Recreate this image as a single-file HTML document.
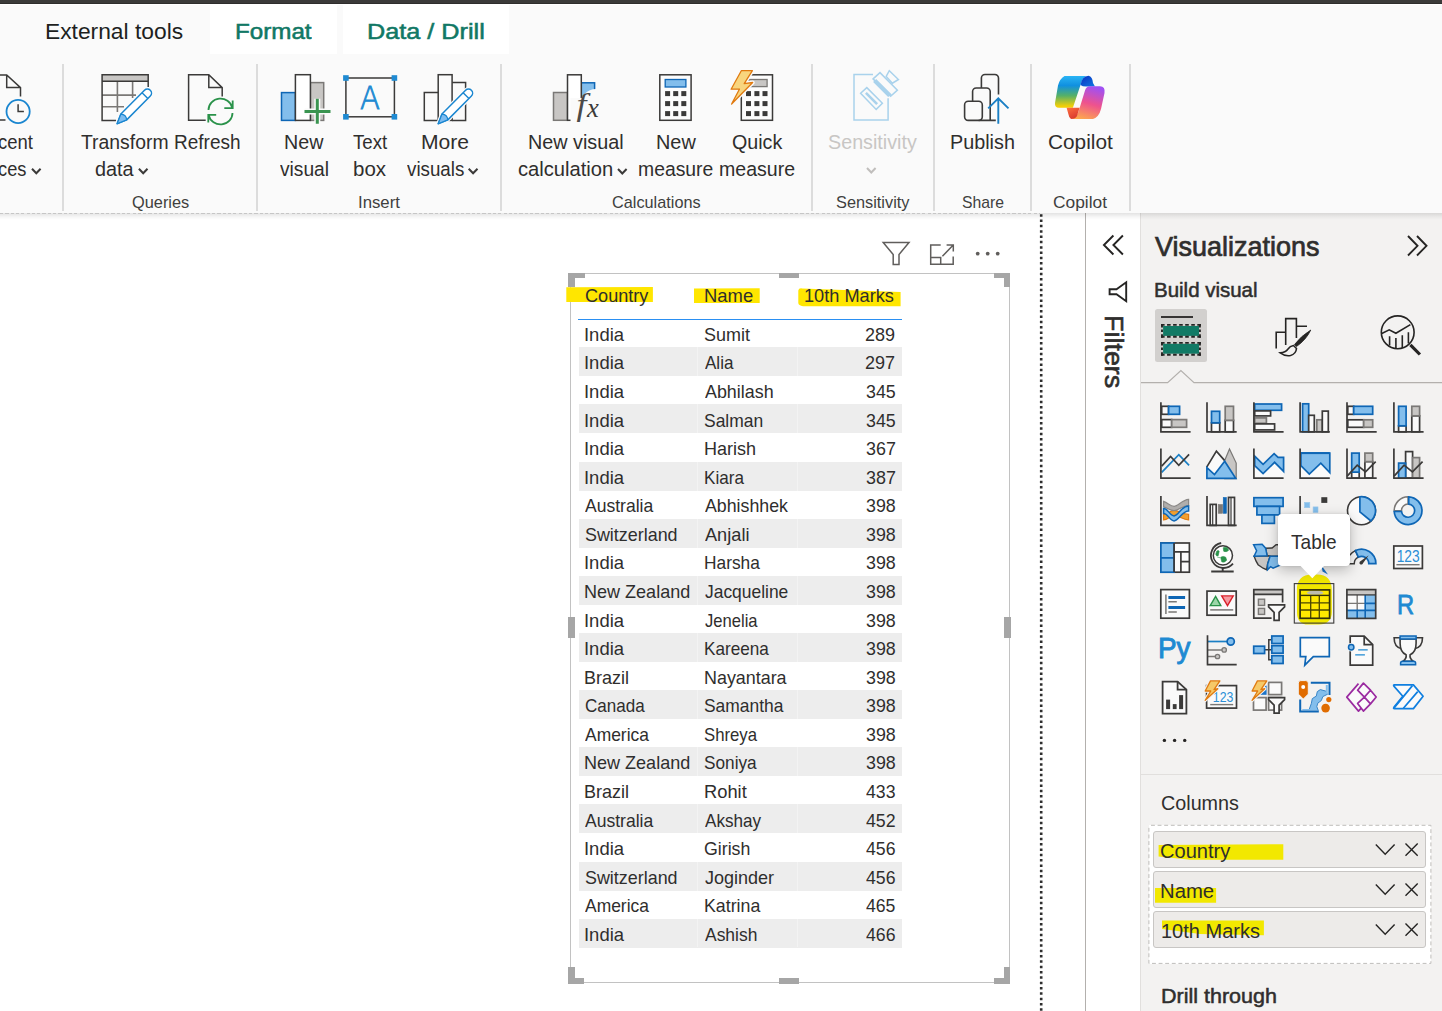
<!DOCTYPE html>
<html lang="en"><head><meta charset="utf-8"><title>Power BI Desktop - Table visual</title>
<style>
html,body{margin:0;padding:0;}
body{width:1442px;height:1011px;overflow:hidden;position:relative;background:#fff;font-family:"Liberation Sans",sans-serif;}
.t{position:absolute;white-space:pre;line-height:1;transform-origin:0 0;display:inline-block;}
.abs{position:absolute;}
#topbar{left:0;top:0;width:1442px;height:4px;background:linear-gradient(#3b3a39 0 2.7px,#2e2d2c 3.2px 4px);border-bottom:1.3px solid #fff;}
#ribbon{left:0;top:4px;width:1442px;height:209px;background:#fafafa;}
.tab{background:#fff;top:4px;height:50px;}
.sep{width:2px;top:64px;height:147px;background:#dcdcdc;}
#ribshadow{left:0;top:213px;width:1442px;height:7px;background:linear-gradient(rgba(0,0,0,0.11),rgba(0,0,0,0.03) 60%,rgba(0,0,0,0));}
#ribline{left:0;top:212.5px;width:1040px;height:1px;background:repeating-linear-gradient(90deg,#c6c6c6 0 3.2px,#e8e8e8 3.2px 5.3px);}
#dotline{left:1040px;top:214px;width:2.5px;height:800px;background:repeating-linear-gradient(180deg,#3a3a3a 0 2.6px,transparent 2.6px 5.35px);}
#filterpane{left:1085.1px;top:213px;width:55px;height:800px;background:#fff;border-left:1.3px solid #b3b0ad;box-sizing:border-box;}
#vizpane{left:1140px;top:213px;width:302px;height:800px;background:#f3f2f1;border-left:1px solid #e1dfdd;box-sizing:border-box;}
.row{left:578.6px;width:323.1px;background:#ededed;}
.pill{left:1153.4px;width:272.3px;background:#edebe9;border:1px solid #c8c6c4;border-radius:3px;box-sizing:border-box;}
.hl{background:#f4e800;}
</style></head><body>

<div class="abs" id="ribbon"></div>
<div class="abs" id="topbar"></div>
<div class="abs tab" style="left:210px;width:127px"></div>
<div class="abs tab" style="left:343px;width:166px"></div>
<div class="abs sep" style="left:62.4px"></div>
<div class="abs sep" style="left:255.5px"></div>
<div class="abs sep" style="left:500.2px"></div>
<div class="abs sep" style="left:810.5px"></div>
<div class="abs sep" style="left:933px"></div>
<div class="abs sep" style="left:1030.2px"></div>
<div class="abs sep" style="left:1128.5px"></div>
<svg class="abs" style="left:1036px;top:0" width="10" height="1011" viewBox="1036 0 10 1011"><path d="M1041.2,214.15 V1012" stroke="#2e2e2e" stroke-width="2.6" stroke-dasharray="2.5 2.83" fill="none"/></svg>
<div class="abs" id="filterpane"></div>
<div class="abs" id="vizpane"></div>
<div class="abs" id="ribshadow"></div>
<div class="abs" id="ribline"></div>
<div class="abs" style="left:570.2px;top:273.1px;width:439.8px;height:709.8px;border:1px solid #c2c2c2;box-sizing:border-box"></div>
<div class="abs row" style="top:347.3px;height:29px"></div>
<div class="abs row" style="top:404.4px;height:29px"></div>
<div class="abs row" style="top:461.6px;height:29px"></div>
<div class="abs row" style="top:518.7px;height:29px"></div>
<div class="abs row" style="top:575.9px;height:29px"></div>
<div class="abs row" style="top:633.0px;height:29px"></div>
<div class="abs row" style="top:690.1px;height:29px"></div>
<div class="abs row" style="top:747.3px;height:29px"></div>
<div class="abs row" style="top:804.4px;height:29px"></div>
<div class="abs row" style="top:861.6px;height:29px"></div>
<div class="abs row" style="top:918.7px;height:29px"></div>
<div class="abs" style="left:697.2px;top:320px;width:1px;height:627px;background:rgba(255,255,255,0.35)"></div>
<div class="abs" style="left:796.6px;top:320px;width:1px;height:627px;background:rgba(255,255,255,0.35)"></div>
<div class="abs" style="left:568.2px;top:272.5px;width:16.4px;height:5.6px;background:#a6a6a6"></div>
<div class="abs" style="left:568.2px;top:272.5px;width:6.8px;height:14.9px;background:#a6a6a6"></div>
<div class="abs" style="left:994.2px;top:272.5px;width:16.3px;height:5.6px;background:#a6a6a6"></div>
<div class="abs" style="left:1003.9px;top:272.5px;width:6.6px;height:14.9px;background:#a6a6a6"></div>
<div class="abs" style="left:568.2px;top:977.7px;width:16.2px;height:6.2px;background:#a6a6a6"></div>
<div class="abs" style="left:568.2px;top:967px;width:6.8px;height:16.9px;background:#a6a6a6"></div>
<div class="abs" style="left:994.4px;top:977.7px;width:16.1px;height:6.2px;background:#a6a6a6"></div>
<div class="abs" style="left:1003.9px;top:967px;width:6.6px;height:16.9px;background:#a6a6a6"></div>
<div class="abs" style="left:778.9px;top:272.5px;width:19.9px;height:5.6px;background:#a6a6a6"></div>
<div class="abs" style="left:778.8px;top:977.7px;width:20.1px;height:6.2px;background:#a6a6a6"></div>
<div class="abs" style="left:568.2px;top:617.2px;width:6.8px;height:20.6px;background:#a6a6a6"></div>
<div class="abs" style="left:1004.1px;top:617.2px;width:6.5px;height:20.6px;background:#a6a6a6"></div>
<div class="abs" style="left:1154.8px;top:309px;width:52.3px;height:52.9px;background:#d2d0ce;border-radius:2.5px"></div>
<div class="abs" style="left:1141px;top:774px;width:301px;height:1px;background:#e1dfdd"></div>
<div class="abs" style="left:1148.5px;top:824.9px;width:282.7px;height:138.8px;background:#fff"></div>
<svg class="abs" style="left:1146px;top:822px" width="290" height="146" viewBox="1146 822 290 146"><rect x="1148.9" y="825.3" width="282" height="138.1" fill="none" stroke="#bfbdbb" stroke-width="1" stroke-dasharray="3.9 2.7" stroke-dashoffset="4.5"/></svg>
<div class="abs pill" style="top:831.3px;height:36.7px"></div>
<div class="abs pill" style="top:871.3px;height:36.4px"></div>
<div class="abs pill" style="top:911.3px;height:36.9px"></div>
<svg class="abs" style="left:0;top:0" width="1442" height="1011" viewBox="0 0 1442 1011">
<g fill="#ffe600">
<path d="M566.3,287.3 L652.9,287 L652.9,301.9 L566.3,302 Z"/>
<path d="M694,288.4 L759.7,288.2 L759.7,303 L694,303 Z"/>
<path d="M798.3,290.5 Q798.6,288 802,288.4 L900.6,292 L900.6,306.3 L803,306.2 Q798.5,305.5 798.3,303 Z"/>
</g>
<g fill="#f2e800">
<path d="M1158.6,845 L1283.3,844.2 L1283.3,859.7 L1190,859.7 L1158.6,856.5 Z"/>
<path d="M1155,888.1 L1216.1,888.1 L1216.1,902.8 L1155,902.8 Z"/>
<path d="M1162,920.6 L1263.9,920.4 L1263.9,935.3 L1200,934 L1162,929 Z"/>
</g>
</svg>
<div class="abs" style="left:578.3px;top:318.6px;width:323.7px;height:1.7px;background:#2a8ff2"></div>
<svg class="abs" style="left:0;top:0" width="1442" height="1011" viewBox="0 0 1442 1011">
<defs>

<linearGradient id="cpL" x1="0" y1="0" x2="0" y2="1"><stop offset="0" stop-color="#2ab4f5"/><stop offset="0.3" stop-color="#1090e0"/><stop offset="0.62" stop-color="#55b068"/><stop offset="0.95" stop-color="#f2cf08"/></linearGradient>
<linearGradient id="cpR" x1="0.6" y1="0" x2="0.3" y2="1"><stop offset="0" stop-color="#a150f2"/><stop offset="0.5" stop-color="#ee528e"/><stop offset="1" stop-color="#fda84e"/></linearGradient>
<linearGradient id="cpB" x1="0" y1="0" x2="1" y2="1"><stop offset="0" stop-color="#0a2fc2"/><stop offset="1" stop-color="#0f78e0"/></linearGradient>
<linearGradient id="cpO" x1="0" y1="0" x2="0.6" y2="1"><stop offset="0" stop-color="#ff7040"/><stop offset="1" stop-color="#d8392e"/></linearGradient>
</defs>
<g fill="none" stroke="#3b3a39" stroke-width="1.5">
<!-- Recent sources (clipped at left) -->
<path d="M-2,74.9 H6.7 L20.5,87.6 V96.5 M6.7,74.9 V87.6 H20.5 M-2,120 H5.5"/>
<circle cx="18.1" cy="111.5" r="11.6" stroke="#1a86d0" stroke-width="1.8" fill="#fafafa"/>
<path d="M18.1,104.3 V111.5 H23.9"/>
<!-- Transform data -->
<rect x="102.1" y="74.7" width="46.1" height="6.6" fill="#c8c6c4" stroke="none"/>
<path d="M117.4,81.3 V112 M132.6,81.3 V98 M102.1,95.1 H136 M102.1,106.8 H124" stroke="#7a7876" stroke-width="1.6"/>
<path d="M116,120.4 H102.1 V74.7 H148.2 V87 M102.1,81.3 H148.2"/>
<g transform="translate(117.1,123.7) rotate(-45.2)">
  <path d="M0,0 L9.5,-4.1 L43,-4.1 A4.1,4.1 0 0 1 43,4.1 L9.5,4.1 Z" fill="#fff" stroke="#fafafa" stroke-width="4" stroke-linejoin="round"/>
  <path d="M0,0 L9.5,-4.1 L43,-4.1 A4.1,4.1 0 0 1 43,4.1 L9.5,4.1 Z" fill="#fff" stroke="#1a86d0" stroke-width="1.5" stroke-linejoin="round"/>
  <path d="M0,0 L9.5,-4.1 Q13,0 9.5,4.1 Z" fill="#7dbcf0" stroke="#1a86d0" stroke-width="1.2" stroke-linejoin="round"/>
  <path d="M39.5,-4.1 L39.5,4.1" stroke="#1a86d0" stroke-width="1.4"/>
</g>
<!-- Refresh -->
<path d="M205.7,120.2 H188.6 V74.7 H208.8 L222.2,87.6 V96.5 M208.8,74.7 V87.6 H222.2"/>
<g stroke="#2a924a" stroke-width="1.8">
<path d="M208.5,110 A12,11.5 0 0 1 232.2,107.5 M224.3,108.2 H232.7 V100.4"/>
<path d="M232.5,113 A12,11.5 0 0 1 208.8,115.5 M216.2,114.8 H208.3 V122.6"/>
</g>
<!-- New visual -->
<rect x="310.4" y="82.6" width="13.3" height="37.8" fill="#c8c6c4" stroke="#7a7876"/>
<rect x="281.5" y="92.6" width="13.9" height="27.8" fill="#83beec" stroke="#0e66b5"/>
<rect x="295.4" y="74.7" width="15" height="45.7" fill="#fff"/>
<path d="M304.5,111.5 H330.5 M317.3,98.7 V123.7" stroke="#fafafa" stroke-width="6"/>
<path d="M304.5,111.5 H330.5 M317.3,98.7 V123.7" stroke="#3a9450" stroke-width="3"/>
<!-- Text box -->
<rect x="345.9" y="78" width="48.5" height="38.8"/>
<g fill="#1f8ad2" stroke="none"><rect x="343.1" y="75.2" width="5.6" height="5.6"/><rect x="391.6" y="75.2" width="5.6" height="5.6"/><rect x="343.1" y="114" width="5.6" height="5.6"/><rect x="391.6" y="114" width="5.6" height="5.6"/></g>
<!-- More visuals -->
<path d="M438.2,92.6 H424.3 V120.4 H438.2 M452.1,82.6 H465.6 V120.4 H452.1" fill="#fafafa"/>
<rect x="438.2" y="74.7" width="13.9" height="45.7" fill="#fafafa"/>
<g transform="translate(438.2,123.7) rotate(-45.2)">
  <path d="M0,0 L9.5,-4.1 L43,-4.1 A4.1,4.1 0 0 1 43,4.1 L9.5,4.1 Z" fill="#fff" stroke="#fafafa" stroke-width="4" stroke-linejoin="round"/>
  <path d="M0,0 L9.5,-4.1 L43,-4.1 A4.1,4.1 0 0 1 43,4.1 L9.5,4.1 Z" fill="#fff" stroke="#1a86d0" stroke-width="1.5" stroke-linejoin="round"/>
  <path d="M0,0 L9.5,-4.1 Q13,0 9.5,4.1 Z" fill="#7dbcf0" stroke="#1a86d0" stroke-width="1.2" stroke-linejoin="round"/>
  <path d="M39.5,-4.1 L39.5,4.1" stroke="#1a86d0" stroke-width="1.4"/>
</g>
<!-- New visual calculation -->
<rect x="581.3" y="82.8" width="13.3" height="16" fill="#83beec" stroke="#0e66b5"/>
<rect x="553.5" y="92.5" width="14" height="27.8" fill="#c8c6c4" stroke="#7a7876"/>
<rect x="567.5" y="74.8" width="13.8" height="45.5" fill="#fff"/>
<!-- New measure -->
<rect x="659.8" y="74.8" width="31.3" height="45.5" fill="#fcfcfc"/>
<rect x="665.2" y="79.5" width="20.7" height="7.5" fill="#83beec" stroke="#0e66b5" stroke-width="1.3"/>
<g fill="#3b3a39" stroke="none">
<rect x="665.1" y="91.1" width="5" height="5"/><rect x="673.2" y="91.1" width="5" height="5"/><rect x="681.3" y="91.1" width="5" height="5"/>
<rect x="665.1" y="101.1" width="5" height="5"/><rect x="673.2" y="101.1" width="5" height="5"/><rect x="681.3" y="101.1" width="5" height="5"/>
<rect x="665.1" y="111.1" width="5" height="5"/><rect x="673.2" y="111.1" width="5" height="5"/><rect x="681.3" y="111.1" width="5" height="5"/>
</g>
<!-- Quick measure -->
<rect x="741.3" y="74.8" width="31.2" height="45.5" fill="#fcfcfc"/>
<rect x="748.8" y="79.5" width="18.3" height="7.1" fill="#c8c6c4" stroke="#7a7876" stroke-width="1.3"/>
<g fill="#3b3a39" stroke="none">
<rect x="746" y="91.1" width="5" height="5"/><rect x="754.4" y="91.1" width="5" height="5"/><rect x="762.5" y="91.1" width="5" height="5"/>
<rect x="746" y="101.1" width="5" height="5"/><rect x="754.4" y="101.1" width="5" height="5"/><rect x="762.5" y="101.1" width="5" height="5"/>
<rect x="746" y="111.1" width="5" height="5"/><rect x="754.4" y="111.1" width="5" height="5"/><rect x="762.5" y="111.1" width="5" height="5"/>
</g>
<path d="M741.3,70.7 H752.4 L744.2,83.6 L752.7,82.5 L731.6,104 L739.4,89.2 H731.1 Z" fill="#f8d57e" stroke="#fafafa" stroke-width="4" stroke-linejoin="round"/>
<path d="M741.3,70.7 H752.4 L744.2,83.6 L752.7,82.5 L731.6,104 L739.4,89.2 H731.1 Z" fill="#f8d57e" stroke="#e07a10" stroke-width="1.3" stroke-linejoin="round"/>
<!-- Sensitivity (disabled) -->
<g stroke="#a9d2ec" stroke-width="1.5">
<path d="M873,74.5 H854 V120 H888.1 V98.2"/>
<path d="M873.1,78.9 L880,72.6 L897.4,90.1 L890.6,96.3 Z" fill="#fafafa"/>
<path d="M873.1,82 L876.2,78.9 L891.8,94.5 L888.1,97 Z" fill="#a9d2ec" stroke="none"/>
<path d="M886.2,76.4 L889.3,70.7 L898.4,79.5 L892.4,83.2 Z" fill="#fafafa"/>
<path d="M860.6,93.2 L866.8,87.6 L882.4,103.2 L876.2,109.4 Z"/>
<path d="M865,93.8 L866.8,92 L878.1,103.2 L876.2,105.1 Z" fill="#a9d2ec" stroke="none"/>
</g>
<!-- Publish -->
<g stroke-width="1.6">
<rect x="964.6" y="101.3" width="17.7" height="19.1" rx="3.6"/>
<path d="M972.6,101.3 V91.6 A3.6,3.6 0 0 1 976.2,88 H986.6 A3.6,3.6 0 0 1 990.2,91.6 V120.4 M978.7,120.4 H995.8"/>
<path d="M981.4,88 V78.1 A3.6,3.6 0 0 1 985,74.5 H994.9 A3.6,3.6 0 0 1 998.5,78.1 V94.5"/>
<path d="M998.3,123.8 V98.6 M988.2,108.4 L998.3,98.3 L1008.5,108.4" stroke="#1a7fc4" stroke-width="1.9"/>
</g>
</g>
<!-- Copilot logo -->
<g stroke="none">
<path d="M1064.5,76 Q1059.5,79 1058,85.5 L1055,103 Q1054.5,107.7 1059,107.7 H1072.9 L1080.5,84.9 Q1082,79 1086,76 Z" fill="url(#cpL)"/>
<path d="M1080.5,84.9 Q1082,76 1088.5,75.7 Q1092.5,76.5 1093,83 L1095,86.5 H1086 Q1082.5,86.5 1080.5,84.9 Z" fill="url(#cpB)"/>
<path d="M1090,86.2 H1100 Q1105.5,86.5 1104.5,93 L1101,109 Q1099,117 1093,119 H1071 Q1077.5,117 1079,110 L1085,90.5 Q1086,86.4 1090,86.2 Z" fill="url(#cpR)"/>
<path d="M1066.6,107.7 H1079.6 L1077,116 Q1075.5,119 1071,119 Q1069,118 1068.5,114.5 Z" fill="url(#cpO)"/>
</g>
<text x="360" y="108.7" font-family="'DejaVu Sans Light','DejaVu Sans','Liberation Sans',sans-serif" font-weight="200" font-size="31.5" fill="#1f8ad2" stroke="#1f8ad2" stroke-width="0.9" textLength="20" lengthAdjust="spacingAndGlyphs">A</text>
<g font-family="'Liberation Serif',serif" font-style="italic" fill="#3b3a39">
<circle cx="596" cy="105" r="16" fill="#fafafa"/><rect x="570.5" y="98" width="20" height="26" fill="#fafafa"/>
<text transform="translate(576.5,115) scale(1.1,1)" font-size="32.5" fill="#4a4948">f</text>
<text x="587" y="116.9" font-size="26.6">x</text></g>
<!-- chevrons -->
<g fill="none" stroke="#3b3a39" stroke-width="2">
<path d="M32,168.7 L36.3,173.2 L40.6,168.7"/>
<path d="M138.9,168.7 L143.2,173.2 L147.5,168.7"/>
<path d="M468.7,168.7 L473.1,173.2 L477.5,168.7"/>
<path d="M618,169 L622.3,173.5 L626.6,169"/>
<path d="M867,168 L871.3,172.5 L875.6,168" stroke="#c0bebc"/>
</g>
</svg>
<svg class="abs" style="left:0;top:0" width="1442" height="1011" viewBox="0 0 1442 1011">
<g transform="translate(1160.1,402.3)"><rect x="1.6" y="4" width="6.90" height="8.00" fill="#fafafa" stroke="#3b3a39" stroke-width="1.7" /><rect x="8.5" y="4" width="11.00" height="8.00" fill="#83beec" stroke="#0e66b5" stroke-width="1.7" /><rect x="1.6" y="17.3" width="10.00" height="7.70" fill="#fafafa" stroke="#3b3a39" stroke-width="1.7" /><rect x="11.6" y="17.3" width="14.90" height="7.70" fill="#c8c6c4" stroke="#7a7876" stroke-width="1.7" /><path d="M0.8,0 V29.5 M0,29.5 H30.5" stroke="#3b3a39" stroke-width="1.7" fill="none"/></g>
<g transform="translate(1206.2,402.3)"><rect x="5.3" y="20.5" width="8.20" height="9.00" fill="#fafafa" stroke="#3b3a39" stroke-width="1.7" /><rect x="5.3" y="9" width="8.20" height="11.50" fill="#83beec" stroke="#0e66b5" stroke-width="1.7" /><rect x="19" y="18" width="8.30" height="11.50" fill="#fafafa" stroke="#3b3a39" stroke-width="1.7" /><rect x="19" y="4" width="8.30" height="14.00" fill="#c8c6c4" stroke="#7a7876" stroke-width="1.7" /><path d="M0.8,0 V29.5 M0,29.5 H30.5" stroke="#3b3a39" stroke-width="1.7" fill="none"/></g>
<g transform="translate(1253.1,402.3)"><rect x="1.6" y="1.7" width="26.90" height="6.30" fill="#83beec" stroke="#0e66b5" stroke-width="1.7" /><rect x="1.6" y="8.6" width="15.90" height="5.00" fill="#fafafa" stroke="#3b3a39" stroke-width="1.7" /><rect x="1.6" y="15.6" width="11.70" height="5.40" fill="#c8c6c4" stroke="#7a7876" stroke-width="1.7" /><rect x="1.6" y="21.6" width="19.90" height="6.00" fill="#fafafa" stroke="#3b3a39" stroke-width="1.7" /><path d="M0.8,0 V29.5 M0,29.5 H30.5" stroke="#3b3a39" stroke-width="1.7" fill="none"/></g>
<g transform="translate(1299.3,402.3)"><rect x="3.3" y="1.5" width="6.10" height="28.00" fill="#83beec" stroke="#0e66b5" stroke-width="1.7" /><rect x="9.4" y="13" width="5.60" height="16.50" fill="#fafafa" stroke="#3b3a39" stroke-width="1.7" /><rect x="17.5" y="17.5" width="5.50" height="12.00" fill="#c8c6c4" stroke="#7a7876" stroke-width="1.7" /><rect x="23" y="8.8" width="6.00" height="20.70" fill="#fafafa" stroke="#3b3a39" stroke-width="1.7" /><path d="M0.8,0 V29.5 M0,29.5 H30.5" stroke="#3b3a39" stroke-width="1.7" fill="none"/></g>
<g transform="translate(1346.2,402.3)"><rect x="1.6" y="4" width="5.90" height="8.00" fill="#fafafa" stroke="#3b3a39" stroke-width="1.7" /><rect x="7.5" y="4" width="19.00" height="8.00" fill="#83beec" stroke="#0e66b5" stroke-width="1.7" /><rect x="1.6" y="17.5" width="15.90" height="7.50" fill="#fafafa" stroke="#3b3a39" stroke-width="1.7" /><rect x="17.5" y="17.5" width="9.00" height="7.50" fill="#c8c6c4" stroke="#7a7876" stroke-width="1.7" /><path d="M0.8,0 V29.5 M0,29.5 H30.5" stroke="#3b3a39" stroke-width="1.7" fill="none"/></g>
<g transform="translate(1393.1,402.3)"><rect x="5.5" y="23.5" width="7.50" height="6.00" fill="#fafafa" stroke="#3b3a39" stroke-width="1.7" /><rect x="5.5" y="4" width="7.50" height="19.50" fill="#83beec" stroke="#0e66b5" stroke-width="1.7" /><rect x="18.7" y="13.5" width="7.80" height="16.00" fill="#fafafa" stroke="#3b3a39" stroke-width="1.7" /><rect x="18.7" y="4" width="7.80" height="9.50" fill="#c8c6c4" stroke="#7a7876" stroke-width="1.7" /><path d="M0.8,0 V29.5 M0,29.5 H30.5" stroke="#3b3a39" stroke-width="1.7" fill="none"/></g>
<g transform="translate(1160.1,448.6)"><path d="M1.6,23.7 L18.7,6 L29,16.7" fill="none" stroke="#1a7fc4" stroke-width="1.7" /><path d="M1.6,17.5 L10.5,7.8 L18.7,16.7 L29,5.8" fill="none" stroke="#3b3a39" stroke-width="1.7" /><path d="M0.8,0 V29.5 M0,29.5 H30.5" stroke="#3b3a39" stroke-width="1.7" fill="none"/></g>
<g transform="translate(1206.2,448.6)"><path d="M18.5,12 L23.3,0.3 L30,14.5 V30 H18.5 Z" fill="#c8c6c4" stroke="#7a7876" stroke-width="1.2" /><path d="M0.5,18.5 L10.2,2.5 L18.5,12 L18.5,24 L0.5,24 Z" fill="#fafafa" stroke="none" stroke-width="1.7" /><path d="M0.5,18.5 L10.2,2.5 L18.5,12" fill="none" stroke="#3b3a39" stroke-width="1.7" /><path d="M0.7,19 L8.3,26 L18.5,12.7 L29.5,29.7 H0.7 Z" fill="#83beec" stroke="#0e66b5" stroke-width="1.7" /></g>
<g transform="translate(1253.1,448.6)"><path d="M1.6,17 L10,25 L21.5,13.7 L30.5,22.8 V29.5 H1.6 Z" fill="#fafafa" stroke="none" stroke-width="1.7" /><path d="M1.6,7.6 L10,15.7 L21,5 L25,8.8 H30.5 V22.8 L21.5,13.7 L10,25 L1.6,17 Z" fill="#83beec" stroke="#0e66b5" stroke-width="1.7" /><path d="M0.8,0 V29.5 M0,29.5 H30.5" stroke="#3b3a39" stroke-width="1.7" fill="none"/></g>
<g transform="translate(1299.3,448.6)"><rect x="1.6" y="4.5" width="28.90" height="25.00" fill="#fafafa" stroke="none" stroke-width="1.7" /><path d="M1.6,4.5 H30.5 V24 L21.5,14.5 L10,25.5 L1.6,17 Z" fill="#83beec" stroke="#0e66b5" stroke-width="1.7" /><path d="M1.6,4.5 H30.5" fill="none" stroke="#0e66b5" stroke-width="2" /><path d="M0.8,0 V29.5 M0,29.5 H30.5" stroke="#3b3a39" stroke-width="1.7" fill="none"/></g>
<g transform="translate(1346.2,448.6)"><rect x="5.5" y="23.5" width="7.50" height="6.00" fill="#fafafa" stroke="#3b3a39" stroke-width="1.7" /><rect x="5.5" y="4.5" width="7.50" height="19.00" fill="#83beec" stroke="#0e66b5" stroke-width="1.7" /><rect x="18.7" y="13" width="7.80" height="16.50" fill="#fafafa" stroke="#3b3a39" stroke-width="1.7" /><rect x="18.7" y="4.5" width="7.80" height="8.50" fill="#c8c6c4" stroke="#7a7876" stroke-width="1.7" /><path d="M1,27.5 L11,16.5 L19.3,23.3 L29.5,13" fill="none" stroke="#3b3a39" stroke-width="1.7" /><path d="M0.8,0 V29.5 M0,29.5 H30.5" stroke="#3b3a39" stroke-width="1.7" fill="none"/></g>
<g transform="translate(1393.1,448.6)"><rect x="12.5" y="3" width="7.00" height="26.50" fill="#fafafa" stroke="#3b3a39" stroke-width="1.7" /><rect x="5.5" y="14.5" width="7.00" height="15.00" fill="#83beec" stroke="#0e66b5" stroke-width="1.7" /><rect x="19.5" y="9" width="7.00" height="20.50" fill="#c8c6c4" stroke="#7a7876" stroke-width="1.7" /><path d="M1,27.5 L11,16.5 L19.3,23.3 L29.5,13" fill="none" stroke="#3b3a39" stroke-width="1.7" /><path d="M0.8,0 V29.5 M0,29.5 H30.5" stroke="#3b3a39" stroke-width="1.7" fill="none"/></g>
<g transform="translate(1160.1,495.9)"><path d="M3.5,18.5 C8,18.5 9.5,14.5 14,14.5 S23,18.5 28.5,18.5 V24 C23,24 18.5,19.5 14,19.5 S8,24 3.5,24 Z" fill="#f0a030" stroke="#e07a10" stroke-width="1.2" /><path d="M3.5,5.5 C8,7 10,10.5 14,10.5 S22,4 28.5,3.5 V9.5 C22,10 18,14.8 14,14.8 S8,12.5 3.5,11 Z" fill="#b0aeac" stroke="#8a8886" stroke-width="1.2" /><path d="M3.5,12.5 C8,12.5 9.5,20 14,20 S21,10 28.5,10 V15 C22,15 18.5,25 14,25 S8,17.5 3.5,17.5 Z" fill="#83beec" stroke="#0e66b5" stroke-width="1.5" /><path d="M0.8,0 V29.5 M0,29.5 H30" fill="none" stroke="#3b3a39" stroke-width="1.7" /></g>
<g transform="translate(1206.2,495.9)"><rect x="4" y="8.5" width="6.00" height="21.00" fill="#fafafa" stroke="#3b3a39" stroke-width="1.7" /><rect x="12" y="8.5" width="4.50" height="9.00" fill="#7a7876" stroke="#7a7876" stroke-width="0.5" /><rect x="17" y="1.5" width="3.30" height="16.00" fill="#0e66b5" stroke="#0e66b5" stroke-width="0.5" /><rect x="22.3" y="1.5" width="6.00" height="28.00" fill="#fafafa" stroke="#3b3a39" stroke-width="1.7" /><path d="M6.5,8.5 V29.5 M24.8,1.5 V29.5" fill="none" stroke="#3b3a39" stroke-width="1.2" /><path d="M0.8,0 V29.5 M0,29.5 H30.5" stroke="#3b3a39" stroke-width="1.7" fill="none"/></g>
<g transform="translate(1253.1,495.9)"><rect x="0.8" y="1.8" width="29.20" height="8.70" fill="#83beec" stroke="#0e66b5" stroke-width="1.7" /><rect x="3.8" y="10.5" width="22.70" height="8.50" fill="#83beec" stroke="#0e66b5" stroke-width="1.7" /><rect x="8.8" y="19" width="12.50" height="8.50" fill="#83beec" stroke="#0e66b5" stroke-width="1.7" /></g>
<g transform="translate(1299.3,495.9)"><path d="M0.8,0 V18" fill="none" stroke="#3b3a39" stroke-width="1.7" /><rect x="22" y="1.3" width="6.00" height="5.70" fill="#3b3a39" stroke="none" stroke-width="0" /><rect x="5.2" y="6.5" width="5.30" height="5.30" fill="#83beec" stroke="#9cc8ec" stroke-width="0.6" /><rect x="13.8" y="11" width="4.90" height="5.60" fill="#83beec" stroke="#9cc8ec" stroke-width="0.6" /></g>
<g transform="translate(1346.2,495.9)"><circle cx="15.3" cy="14.8" r="14" fill="#fafafa" stroke="#3b3a39" stroke-width="1.6"/><path d="M13.7,0.9 A14,14 0 0 1 24.8,25.1 L13.7,16 Z" fill="#83beec" stroke="#0e66b5" stroke-width="1.7" /></g>
<g transform="translate(1393.1,495.9)"><path d="M15,0.9 A13.9,13.9 0 0 0 1.1,14.8 H8.4 A6.6,6.6 0 0 1 15,8.2 Z" fill="#fafafa" stroke="#7a7876" stroke-width="1.5" /><path d="M15.6,0.9 A13.9,13.9 0 1 1 1.1,15.6 H8.4 A6.6,6.6 0 1 0 15.6,8.2 Z" fill="#83beec" stroke="#0e66b5" stroke-width="1.7" /></g>
<g transform="translate(1160.1,542.2)"><rect x="0.8" y="0.8" width="28.50" height="29.20" fill="#fafafa" stroke="#3b3a39" stroke-width="1.7" /><rect x="0.8" y="0.8" width="13.20" height="14.90" fill="#83beec" stroke="#0e66b5" stroke-width="1.7" /><rect x="0.8" y="15.7" width="13.20" height="14.30" fill="#83beec" stroke="#0e66b5" stroke-width="1.7" /><path d="M14,9.6 H29.3 M20.8,9.6 V30 M20.8,19.4 H29.3 M14,0.8 V30" fill="none" stroke="#3b3a39" stroke-width="1.7" /></g>
<g transform="translate(1206.2,542.2)"><circle cx="16.7" cy="13.2" r="9.6" fill="#fff" stroke="#3b3a39" stroke-width="1.5"/><path d="M17,5.5 Q19,4.5 21,5.5 L22.5,8 Q20,10.5 17.5,9 Z M10.5,9 Q12,7.5 13,9 L12,13.5 Q10,14.5 9.5,12 Z M14.5,15 Q17,13.5 19.5,15 L20.5,18 Q18,21 15.5,19.5 Z M11,14.8 L14,15.6" fill="#2a924a" stroke="#2a924a" stroke-width="0.6"/><path d="M15,0.8 A12.6,12.6 0 1 0 26.8,21.5" fill="none" stroke="#3b3a39" stroke-width="1.8" /><path d="M16.5,25.8 V29.3 M5,29.3 H27.5" fill="none" stroke="#3b3a39" stroke-width="1.9" /></g>
<g transform="translate(1253.1,542.2)"><path d="M12.5,6 L19,5.8 L23,2.5 H29 V14 H17 L14,13.5 Z" fill="#c8c6c4" stroke="#3b3a39" stroke-width="1.4" /><path d="M1,14 L14,13.5 L17,14 L14.5,22 L13.5,27.5 L10,26 L5,22.5 L3,19 Z" fill="#c8c6c4" stroke="#3b3a39" stroke-width="1.4" /><path d="M0.5,2.5 L9,2 L12.5,6 L14,13.5 L1,14 L3.5,8.5 Z" fill="#83beec" stroke="#0e66b5" stroke-width="1.5" /><path d="M17,14 H29 V22 L20,26 L17.5,24.5 L14.5,27.5 L14.5,22 Z" fill="#83beec" stroke="#0e66b5" stroke-width="1.5" /></g>
<g transform="translate(1346.2,542.2)"><path d="M0.9,21.5 A14.4,14.4 0 0 1 9.2,8.4 L12.2,14.9 A7.3,7.3 0 0 0 8,21.5 Z" fill="#fafafa" stroke="#3b3a39" stroke-width="1.5" /><path d="M9.2,8.4 A14.4,14.4 0 0 1 29.7,21.5 H22.6 A7.3,7.3 0 0 0 12.2,14.9 Z" fill="#83beec" stroke="#0e66b5" stroke-width="1.7" /><path d="M22.5,13 L16.8,21 A1.8,1.8 0 1 1 14.2,19 Z" fill="#3b3a39" stroke="none" stroke-width="0" /></g>
<g transform="translate(1393.1,542.2)"><rect x="0.7" y="3.8" width="28.60" height="22.50" fill="#fafafa" stroke="#3b3a39" stroke-width="1.7" /><path d="M3.3,22.5 H26.5" fill="none" stroke="#7a7876" stroke-width="1.4" /><text x="3.6" y="20" font-family="'Liberation Sans',sans-serif" font-size="15.6" fill="#2b8fd6" textLength="23" lengthAdjust="spacingAndGlyphs">123</text></g>
<g transform="translate(1160.1,588.9)"><rect x="0.7" y="0.7" width="28.60" height="28.60" fill="#fafafa" stroke="#3b3a39" stroke-width="1.7" /><path d="M5.8,5.5 V25 M8.3,12.8 H16.7 M8.3,23 H16.7" fill="none" stroke="#7a7876" stroke-width="1.5" /><path d="M8.3,8.5 H25 M8.3,18.5 H25" fill="none" stroke="#0e66b5" stroke-width="3" /></g>
<g transform="translate(1206.2,588.9)"><rect x="0.8" y="2.2" width="29.20" height="24.10" fill="#fafafa" stroke="#3b3a39" stroke-width="1.7" /><path d="M4,16.7 L9.4,7.5 L14.6,16.7 Z" fill="#9bd6a8" stroke="#2a924a" stroke-width="1.4" /><path d="M15.5,7 H27 L21.3,16.7 Z" fill="#f59aa0" stroke="#d9202a" stroke-width="1.4" /><path d="M4,21 H27" fill="none" stroke="#7a7876" stroke-width="1.5" /></g>
<g transform="translate(1253.1,588.9)"><rect x="0.7" y="0.7" width="28.80" height="4.80" fill="#c8c6c4" stroke="none" stroke-width="0" /><path d="M18.5,29.3 H0.7 V0.7 H29.5 V13.5 M0.7,5.5 H29.5" fill="none" stroke="#3b3a39" stroke-width="1.7" /><rect x="5.3" y="10.3" width="6.20" height="6.20" fill="#c8c6c4" stroke="#7a7876" stroke-width="1.4" /><rect x="5.3" y="19.5" width="6.20" height="6.00" fill="#c8c6c4" stroke="#7a7876" stroke-width="1.4" /><path d="M15.5,16 H31.5 V18 L26,23.5 V31.5 H21 V23.5 L15.5,18 Z" fill="#fafafa" stroke="#3b3a39" stroke-width="1.7" /></g>
<g transform="translate(1346.2,588.9)"><rect x="0.7" y="0.7" width="28.80" height="5.30" fill="#c8c6c4" stroke="none" stroke-width="0" /><rect x="0.7" y="6" width="18.30" height="15.50" fill="#fafafa" stroke="none" stroke-width="0" /><rect x="19" y="6" width="10.50" height="23.50" fill="#83beec" stroke="none" stroke-width="0" /><rect x="0.7" y="21.5" width="28.80" height="8.00" fill="#83beec" stroke="none" stroke-width="0" /><path d="M0.7,14.5 H19 M11,6 V21.5" fill="none" stroke="#7a7876" stroke-width="1.4" /><path d="M19,6 V29.5 M0.7,21.5 H29.5 M19,14.5 H29.5 M11,21.5 V29.5" fill="none" stroke="#0e66b5" stroke-width="1.6" /><rect x="0.7" y="0.7" width="28.80" height="28.80" fill="none" stroke="#3b3a39" stroke-width="1.7" /><path d="M0.7,6 H29.5" fill="none" stroke="#3b3a39" stroke-width="1.3" /></g>
<g transform="translate(1206.2,635.2)"><path d="M1.3,6.3 H21" fill="none" stroke="#1a7fc4" stroke-width="1.7" /><circle cx="24.5" cy="6.3" r="3.6" fill="#83beec" stroke="#0e66b5" stroke-width="1.7"/><path d="M1.3,14.7 H16 M1.3,21.3 H9.5" fill="none" stroke="#7a7876" stroke-width="1.5" /><circle cx="18" cy="14.7" r="2.2" fill="#c8c6c4" stroke="#7a7876" stroke-width="1.3"/><circle cx="11.3" cy="21.3" r="2.2" fill="#c8c6c4" stroke="#7a7876" stroke-width="1.3"/><path d="M1.3,0 V29.5 M0.5,29.5 H30.5" fill="none" stroke="#3b3a39" stroke-width="1.7" /></g>
<g transform="translate(1253.1,635.2)"><path d="M11.5,14.5 H18.7 M18.7,4.5 H15.7 V24.5 H18.7" fill="none" stroke="#3b3a39" stroke-width="1.5" /><rect x="0.6" y="11" width="10.90" height="7.30" fill="#83beec" stroke="#0e66b5" stroke-width="1.7" /><rect x="18.7" y="0.8" width="11.30" height="7.50" fill="#83beec" stroke="#0e66b5" stroke-width="1.7" /><rect x="18.7" y="10.5" width="11.30" height="7.50" fill="#83beec" stroke="#0e66b5" stroke-width="1.7" /><rect x="18.7" y="20.5" width="11.30" height="7.80" fill="#83beec" stroke="#0e66b5" stroke-width="1.7" /></g>
<g transform="translate(1299.3,635.2)"><path d="M1,2.5 H30 V21.5 H14 L5.5,30 L6.5,21.5 H1 Z" fill="#fafafa" stroke="#0e66b5" stroke-width="1.7" stroke-linejoin="miter"/></g>
<g transform="translate(1346.2,635.2)"><path d="M4,1 H18 L26.5,9.5 V30 H4 Z" fill="#fafafa" stroke="#3b3a39" stroke-width="1.7" /><path d="M18,1 V9.5 H26.5" fill="none" stroke="#3b3a39" stroke-width="1.7" /><circle cx="5" cy="12" r="4.3" fill="#f3f2f1"/><circle cx="5" cy="12" r="2.7" fill="#83beec" stroke="#0e66b5" stroke-width="1.5"/><path d="M12,14.7 H21.5 M9,19.7 H18.7" fill="none" stroke="#1f8ad2" stroke-width="1.4" /></g>
<g transform="translate(1393.1,635.2)"><path d="M7,2.6 H1 C1,9 3,12.5 8.5,13.5 M23,2.6 H29.4 C29.4,9 27.4,12.5 21.5,13.5" fill="none" stroke="#3b3a39" stroke-width="1.6" /><path d="M7,3.8 V8 C7,14 9.5,18 13,19.5 C13.5,22 12,24.5 10,26 H20 C18,24.5 16.5,22 17,19.5 C20.5,18 23,14 23,8 V3.8 Z" fill="#fafafa" stroke="#3b3a39" stroke-width="1.6" /><rect x="7" y="0.8" width="16.00" height="3.00" fill="#83beec" stroke="#0e66b5" stroke-width="1.5" /><path d="M7.5,29.5 V27.8 Q7.5,26 9.5,26 H20.5 Q22.5,26 22.5,27.8 V29.5 Z" fill="#83beec" stroke="#0e66b5" stroke-width="1.5" /></g>
<g transform="translate(1160.1,681.6)"><path d="M2.5,0 H17.5 L26.3,8 V32 H2.5 Z" fill="#fafafa" stroke="#3b3a39" stroke-width="1.8" /><path d="M17.5,0 V8 H26.3" fill="none" stroke="#3b3a39" stroke-width="1.8" /><rect x="6" y="18" width="4.00" height="9.50" fill="#3b3a39" stroke="none" stroke-width="0" /><rect x="12.7" y="22.5" width="3.80" height="5.00" fill="#3b3a39" stroke="none" stroke-width="0" /><rect x="19" y="13.5" width="4.00" height="14.00" fill="#3b3a39" stroke="none" stroke-width="0" /></g>
<g transform="translate(1206.2,681.6)"><rect x="0.4" y="4" width="29.90" height="22.50" fill="#fafafa" stroke="#3b3a39" stroke-width="1.7" /><path d="M4,23 H27" fill="none" stroke="#7a7876" stroke-width="1.4" /><text x="6.6" y="20" font-family="'Liberation Sans',sans-serif" font-size="15" fill="#2b8fd6" textLength="20.5" lengthAdjust="spacingAndGlyphs">123</text><path d="M4.3,-0.7 H13.7 L7.8,8.1 L11.6,7.1 L-1,18.7 L4.6,9.4 H-1 Z" fill="#f8d57e" stroke="#f3f2f1" stroke-width="3.4" stroke-linejoin="round"/><path d="M4.3,-0.7 H13.7 L7.8,8.1 L11.6,7.1 L-1,18.7 L4.6,9.4 H-1 Z" fill="#f6c968" stroke="#e07a10" stroke-width="1.3" stroke-linejoin="round"/></g>
<g transform="translate(1253.1,681.6)"><rect x="15.5" y="0.8" width="13.00" height="12.20" fill="#fafafa" stroke="#7a7876" stroke-width="1.7" /><rect x="0.4" y="16" width="12.60" height="12.50" fill="#fafafa" stroke="#7a7876" stroke-width="1.7" /><rect x="15.5" y="16" width="13.00" height="12.50" fill="#fafafa" stroke="#7a7876" stroke-width="1.7" /><rect x="6" y="4" width="7.50" height="9.20" fill="#1a73c8" stroke="none" stroke-width="0" /><path d="M15.5,16 H31.5 V18 L26,23.5 V31.5 H21 V23.5 L15.5,18 Z" fill="#fafafa" stroke="#3b3a39" stroke-width="1.7" /><path d="M4.3,-0.7 H13.7 L7.8,8.1 L11.6,7.1 L-1,18.7 L4.6,9.4 H-1 Z" fill="#f8d57e" stroke="#f3f2f1" stroke-width="3.4" stroke-linejoin="round"/><path d="M4.3,-0.7 H13.7 L7.8,8.1 L11.6,7.1 L-1,18.7 L4.6,9.4 H-1 Z" fill="#f6c968" stroke="#e07a10" stroke-width="1.3" stroke-linejoin="round"/></g>
<g transform="translate(1299.3,681.6)"><path d="M26.5,3.5 V9.5 L21,8 L18,10 L17,14.5 L13,17 L12,22 L10,27.5 H3 V29 H19 L17.5,25 L18.5,21.5 L22,19 L23.5,15 L28.5,12.5 V3.5 Z" fill="#83beec" stroke="none" stroke-width="0" /><path d="M11.5,1.2 H30.2 V13.5 M0.9,18 V29.9 H19.5" fill="none" stroke="#0e66b5" stroke-width="2" /><path d="M26.5,9.5 L21,8 L18,10 L17,14.5 L13,17 L12,22 L10,27.5 M19,29 L17.5,25 L18.5,21.5 L22,19 L23.5,15 L28.5,12.5" fill="none" stroke="#3a86c8" stroke-width="1" /><path d="M-1,1.5 Q-1,-1 1.5,-1 H6.5 Q9,-1 9,1.5 V12.5 L4,17.5 L-1,12.5 Z" fill="#e06c00" stroke="#f3f2f1" stroke-width="1"/><circle cx="3.9" cy="5.5" r="2" fill="#fff"/><circle cx="29.5" cy="18" r="2.6" fill="#e06c00"/><circle cx="26.3" cy="26.5" r="4.3" fill="#e06c00"/></g>
<g transform="translate(1346.2,681.6)"><path d="M12.3,2 L0.6,15.5 L12.3,29.5 L15,26.5" fill="#fafafa" stroke="#9a2aa0" stroke-width="1.7" stroke-linejoin="round"/><path d="M17.2,1.5 L24.3,8.6 L18.2,15.5 L11.4,8.6 Z M24.3,8.6 L30,15.4 L24.3,22.3 L18.2,15.5 Z M18.2,15.5 L24.3,22.3 L17.2,29.5 L11.4,21.8 Z" fill="#fafafa" stroke="#9a2aa0" stroke-width="1.7" stroke-linejoin="round"/></g>
<g transform="translate(1393.1,681.6)"><path d="M1.3,3.3 H20.3 L30,14.7 L20.3,27 H1.3 Q0,27 0.8,25.8 L9.7,14.7 L0.8,4.5 Q0,3.3 1.3,3.3 Z" fill="#fafafa" stroke="#0f7fe0" stroke-width="1.7" stroke-linejoin="round"/><path d="M19.3,4 L1,26.3 M24.6,10 L10.3,26.6" fill="none" stroke="#0f7fe0" stroke-width="1.7" /></g>
<g fill="none" stroke="#252423" stroke-width="1.6">
<path d="M1161,317 H1193" stroke-width="1.8"/>
<rect x="1163.1" y="326" width="35.9" height="9.9" fill="#117a65" stroke="none"/>
<rect x="1163.1" y="343.8" width="35.9" height="9.9" fill="#117a65" stroke="none"/>
<path d="M1161,324.9 H1200.9 M1161,336.8 H1200.9 M1161,342.9 H1200.9 M1161,354.7 H1200.9" stroke-dasharray="3.6 2.45" stroke-width="1.9"/>
<path d="M1162,323.9 V337.8 M1199.9,323.9 V337.8 M1162,341.9 V355.7 M1199.9,341.9 V355.7" stroke-dasharray="3.5 2.2 2.5 2.2 3.5 0" stroke-width="1.9"/>
<path d="M1276.2,348.4 V332.3 H1285.7 M1285.7,345 V318.6 H1296.4 V338 M1296.4,326.2 H1307"/>
<path d="M1310.8,330 Q1306,340 1296.5,346.5 L1294.5,344.5 Q1301,336 1310.8,330 Z" fill="#252423" stroke-width="0.8"/>
<path d="M1293.5,345.5 Q1290,346 1288,349 Q1285.5,352.5 1280.2,352.9 Q1285,356.5 1290.5,355.5 Q1296,354 1296.5,348.5 Z" fill="#f3f2f1"/>
<circle cx="1397.7" cy="332.3" r="16.4"/>
<path d="M1381.8,333.5 L1389.2,329.9 L1395.9,333.3 L1410.4,324.6 M1389.6,336.3 V345.4 M1395.9,338 V348 M1402.3,335.3 V348 M1408.4,332.3 V343.4"/>
<path d="M1410.4,344.8 L1419.9,354.5" stroke-width="3.2"/>
<path d="M1141,382.7 H1167.6 L1180.9,370.6 L1194,382.7 H1442" stroke="#b3b0ad" stroke-width="1.2"/>
<!-- pane chevrons -->
<path d="M1113.4,235.5 L1103.9,245 L1113.4,254.5 M1122.9,235.5 L1113.4,245 L1122.9,254.5" stroke-width="1.9"/>
<path d="M1408,236 L1417.5,245.8 L1408,255.5 M1417,236 L1426.5,245.8 L1417,255.5" stroke-width="1.9"/>
<path d="M1126.2,282.3 V301.2 L1116.5,294.3 H1109.6 V289.2 H1116.5 Z" stroke-width="1.9"/>
</g>
<g fill="#252423"><circle cx="1164.4" cy="740.4" r="1.7"/><circle cx="1174.6" cy="740.4" r="1.7"/><circle cx="1184.7" cy="740.4" r="1.7"/></g>
<g fill="none" stroke="#252423" stroke-width="1.4">
<path d="M1375.8,844.6 L1385.2,854.2 L1394.6,844.6 M1405.5,843.6 L1417.7,855.8 M1417.7,843.6 L1405.5,855.8"/>
<path d="M1375.8,884.6 L1385.2,894.2 L1394.6,884.6 M1405.5,883.6 L1417.7,895.8 M1417.7,883.6 L1405.5,895.8"/>
<path d="M1375.8,924.6 L1385.2,934.2 L1394.6,924.6 M1405.5,923.6 L1417.7,935.8 M1417.7,923.6 L1405.5,935.8"/>
</g>
<g fill="none" stroke="#605e5c" stroke-width="1.5">
<path d="M883.2,242.5 H909 L899,254.6 V264.6 H893.2 V254.6 Z"/>
<path d="M940.7,245 H930.7 V264.2 H953.2 V256.6 M930.7,257.5 H940.7 V264.2 M942.4,256.3 L953,245.3 M946.6,245 H953.3 V251.6"/>
</g><g fill="#605e5c"><circle cx="977.7" cy="253.6" r="1.9"/><circle cx="987.7" cy="253.6" r="1.9"/><circle cx="997.7" cy="253.6" r="1.9"/></g>
</svg>
<svg class="abs" style="left:0;top:0" width="1442" height="1011" viewBox="0 0 1442 1011">
<path d="M1321.5,565.5 L1328,574.5 L1322.5,571.5 Z" fill="#1a73c8"/>
<path d="M1296.9,590 C1296.9,580 1302,574.6 1312,574.6 L1317,574.6 C1327,574.6 1331.8,580 1331.8,590 L1331.9,612 C1331.9,620 1327,624.5 1319,624.5 L1308,624.6 C1301,624.6 1297,620 1297,613 Z" fill="#f0e600"/>
<path d="M1300.5,590.3 H1329.2 V618 H1300.5 Z" fill="#ffe900"/>
<ellipse cx="1315.1" cy="592.7" rx="8.3" ry="2.1" fill="#bdbcb0"/>
<g fill="none" stroke="#4a4600" stroke-width="1.3"><path d="M1310.7,595.4 V618 M1319.3,595.4 V618 M1300.5,602.8 H1329.2 M1300.5,610 H1329.2"/></g>
<g fill="none" stroke="#33320a" stroke-width="1.7"><rect x="1300.1" y="589.9" width="29.5" height="28.4"/><path d="M1300.1,595.4 H1329.6" stroke-width="1.4"/></g>
<rect x="1294.3" y="583.6" width="39.5" height="39.5" fill="none" stroke="#3b3a39" stroke-width="1.1"/>
</svg>
<div class="abs" style="left:1278.3px;top:514.1px;width:71.4px;height:51.8px;background:#fff;border-radius:4px;box-shadow:0 4px 13px rgba(0,0,0,0.25),0 0 3px rgba(0,0,0,0.10)"></div>
<svg class="abs" style="left:1295px;top:565px" width="36" height="16" viewBox="1295 565 36 16"><path d="M1299.6,565 H1325 L1312.3,578.2 Z" fill="#fff"/></svg>
<span class="t " style="left:45.0px;top:21.0px;font-size:22px;color:#201f1e;transform:scaleX(1.0360);">External tools</span>
<span class="t " style="left:234.6px;top:21.0px;font-size:22px;color:#117865;-webkit-text-stroke:0.55px #117865;transform:scaleX(1.0986);">Format</span>
<span class="t " style="left:366.9px;top:21.0px;font-size:22px;color:#117865;-webkit-text-stroke:0.55px #117865;transform:scaleX(1.1468);">Data / Drill</span>
<span class="t " style="left:-1.8px;top:133.0px;font-size:19.3px;color:#2f2e2d;transform:scaleX(0.9580);">cent</span>
<span class="t " style="left:-1.8px;top:160.0px;font-size:19.3px;color:#2f2e2d;transform:scaleX(0.9474);">ces</span>
<span class="t " style="left:81.1px;top:133.0px;font-size:19.3px;color:#2f2e2d;transform:scaleX(1.0043);">Transform</span>
<span class="t " style="left:94.8px;top:160.0px;font-size:19.3px;color:#2f2e2d;transform:scaleX(1.0294);">data</span>
<span class="t " style="left:173.7px;top:133.0px;font-size:19.3px;color:#2f2e2d;transform:scaleX(0.9849);">Refresh</span>
<span class="t " style="left:131.7px;top:194.0px;font-size:16.2px;color:#403f3e;transform:scaleX(1.0102);">Queries</span>
<span class="t " style="left:283.6px;top:133.0px;font-size:19.3px;color:#2f2e2d;transform:scaleX(1.0205);">New</span>
<span class="t " style="left:279.7px;top:160.0px;font-size:19.3px;color:#2f2e2d;transform:scaleX(0.9950);">visual</span>
<span class="t " style="left:353.3px;top:133.0px;font-size:19.3px;color:#2f2e2d;transform:scaleX(0.9684);">Text</span>
<span class="t " style="left:353.3px;top:160.0px;font-size:19.3px;color:#2f2e2d;transform:scaleX(1.0627);">box</span>
<span class="t " style="left:421.4px;top:133.0px;font-size:19.3px;color:#2f2e2d;transform:scaleX(1.0941);">More</span>
<span class="t " style="left:407.3px;top:160.0px;font-size:19.3px;color:#2f2e2d;transform:scaleX(0.9729);">visuals</span>
<span class="t " style="left:357.6px;top:194.0px;font-size:16.2px;color:#403f3e;transform:scaleX(1.0338);">Insert</span>
<span class="t " style="left:527.7px;top:133.0px;font-size:19.3px;color:#2f2e2d;transform:scaleX(1.0259);">New visual</span>
<span class="t " style="left:518.0px;top:160.0px;font-size:19.3px;color:#2f2e2d;transform:scaleX(1.0456);">calculation</span>
<span class="t " style="left:655.5px;top:133.0px;font-size:19.3px;color:#2f2e2d;transform:scaleX(1.0313);">New</span>
<span class="t " style="left:638.1px;top:160.0px;font-size:19.3px;color:#2f2e2d;transform:scaleX(1.0042);">measure</span>
<span class="t " style="left:731.5px;top:133.0px;font-size:19.3px;color:#2f2e2d;transform:scaleX(1.0204);">Quick</span>
<span class="t " style="left:718.8px;top:160.0px;font-size:19.3px;color:#2f2e2d;transform:scaleX(1.0138);">measure</span>
<span class="t " style="left:612.4px;top:194.0px;font-size:16.2px;color:#403f3e;transform:scaleX(1.0048);">Calculations</span>
<span class="t " style="left:827.9px;top:133.0px;font-size:19.3px;color:#c8c6c4;transform:scaleX(1.0235);">Sensitivity</span>
<span class="t " style="left:835.8px;top:194.0px;font-size:16.2px;color:#403f3e;transform:scaleX(1.0082);">Sensitivity</span>
<span class="t " style="left:949.8px;top:133.0px;font-size:19.3px;color:#2f2e2d;transform:scaleX(1.0263);">Publish</span>
<span class="t " style="left:961.5px;top:194.0px;font-size:16.2px;color:#403f3e;transform:scaleX(0.9725);">Share</span>
<span class="t " style="left:1047.7px;top:133.0px;font-size:19.3px;color:#2f2e2d;transform:scaleX(1.0796);">Copilot</span>
<span class="t " style="left:1052.6px;top:194.0px;font-size:16.2px;color:#403f3e;transform:scaleX(1.0718);">Copilot</span>
<span class="t " style="left:1154.9px;top:233.0px;font-size:27.2px;color:#2f2e2d;-webkit-text-stroke:0.7px #2f2e2d;transform:scaleX(0.9924);">Visualizations</span>
<span class="t " style="left:1154.3px;top:281.0px;font-size:19.8px;color:#2f2e2d;-webkit-text-stroke:0.5px #2f2e2d;transform:scaleX(1.0349);">Build visual</span>
<span class="t " style="left:1104.7px;top:315.0px;font-size:26.3px;color:#2f2e2d;-webkit-text-stroke:0.6px #2f2e2d;transform-origin:0 22.26px;transform:translateY(-22.26px) rotate(90deg) scaleX(1.0236);">Filters</span>
<span class="t " style="left:1291.4px;top:533.0px;font-size:19.8px;color:#2f2e2d;transform:scaleX(0.9636);">Table</span>
<span class="t " style="left:1160.7px;top:794.0px;font-size:19.7px;color:#2f2e2d;transform:scaleX(1.0030);">Columns</span>
<span class="t z3" style="left:1159.9px;top:842.0px;font-size:19.7px;color:#2f2e2d;transform:scaleX(1.0192);">Country</span>
<span class="t z3" style="left:1159.5px;top:882.0px;font-size:19.7px;color:#2f2e2d;transform:scaleX(1.0312);">Name</span>
<span class="t z3" style="left:1160.5px;top:922.0px;font-size:19.7px;color:#2f2e2d;transform:scaleX(1.0160);">10th Marks</span>
<span class="t " style="left:1161.4px;top:987.0px;font-size:19.8px;color:#2f2e2d;-webkit-text-stroke:0.5px #2f2e2d;transform:scaleX(1.0873);">Drill through</span>
<span class="t " style="left:1397.3px;top:591.0px;font-size:28px;color:#1f8ad2;-webkit-text-stroke:0.8px #1f8ad2;transform:scaleX(0.8474);">R</span>
<span class="t " style="left:1157.5px;top:634.0px;font-size:29px;color:#1f8ad2;-webkit-text-stroke:0.9px #1f8ad2;transform:scaleX(0.9615);">Py</span>
<span class="t " style="left:584.5px;top:287.0px;font-size:18.5px;color:#2f2e2d;transform:scaleX(0.9780);">Country</span>
<span class="t " style="left:703.9px;top:287.0px;font-size:18.5px;color:#2f2e2d;transform:scaleX(0.9953);">Name</span>
<span class="t " style="left:803.9px;top:287.0px;font-size:18.5px;color:#2f2e2d;transform:scaleX(0.9828);">10th Marks</span>
<span class="t " style="left:583.7px;top:326.0px;font-size:18.5px;color:#2f2e2d;transform:scaleX(0.9969);">India</span>
<span class="t " style="left:704.4px;top:326.0px;font-size:18.5px;color:#2f2e2d;transform:scaleX(0.9715);">Sumit</span>
<span class="t " style="left:865.4px;top:326.0px;font-size:18.5px;color:#2f2e2d;transform:scaleX(0.9736);">289</span>
<span class="t " style="left:583.7px;top:354.0px;font-size:18.5px;color:#2f2e2d;transform:scaleX(0.9969);">India</span>
<span class="t " style="left:705.2px;top:354.0px;font-size:18.5px;color:#2f2e2d;transform:scaleX(0.9214);">Alia</span>
<span class="t " style="left:865.4px;top:354.0px;font-size:18.5px;color:#2f2e2d;transform:scaleX(0.9754);">297</span>
<span class="t " style="left:583.7px;top:383.0px;font-size:18.5px;color:#2f2e2d;transform:scaleX(0.9969);">India</span>
<span class="t " style="left:705.2px;top:383.0px;font-size:18.5px;color:#2f2e2d;transform:scaleX(0.9666);">Abhilash</span>
<span class="t " style="left:865.6px;top:383.0px;font-size:18.5px;color:#2f2e2d;transform:scaleX(0.9628);">345</span>
<span class="t " style="left:583.7px;top:412.0px;font-size:18.5px;color:#2f2e2d;transform:scaleX(0.9969);">India</span>
<span class="t " style="left:704.4px;top:412.0px;font-size:18.5px;color:#2f2e2d;transform:scaleX(0.9441);">Salman</span>
<span class="t " style="left:865.6px;top:412.0px;font-size:18.5px;color:#2f2e2d;transform:scaleX(0.9628);">345</span>
<span class="t " style="left:583.7px;top:440.0px;font-size:18.5px;color:#2f2e2d;transform:scaleX(0.9969);">India</span>
<span class="t " style="left:703.7px;top:440.0px;font-size:18.5px;color:#2f2e2d;transform:scaleX(0.9734);">Harish</span>
<span class="t " style="left:865.6px;top:440.0px;font-size:18.5px;color:#2f2e2d;transform:scaleX(0.9679);">367</span>
<span class="t " style="left:583.7px;top:469.0px;font-size:18.5px;color:#2f2e2d;transform:scaleX(0.9969);">India</span>
<span class="t " style="left:703.8px;top:469.0px;font-size:18.5px;color:#2f2e2d;transform:scaleX(0.9236);">Kiara</span>
<span class="t " style="left:865.6px;top:469.0px;font-size:18.5px;color:#2f2e2d;transform:scaleX(0.9679);">387</span>
<span class="t " style="left:585.4px;top:497.0px;font-size:18.5px;color:#2f2e2d;transform:scaleX(0.9479);">Australia</span>
<span class="t " style="left:705.2px;top:497.0px;font-size:18.5px;color:#2f2e2d;transform:scaleX(0.9595);">Abhishhek</span>
<span class="t " style="left:865.6px;top:497.0px;font-size:18.5px;color:#2f2e2d;transform:scaleX(0.9637);">398</span>
<span class="t " style="left:584.6px;top:526.0px;font-size:18.5px;color:#2f2e2d;transform:scaleX(0.9679);">Switzerland</span>
<span class="t " style="left:705.2px;top:526.0px;font-size:18.5px;color:#2f2e2d;transform:scaleX(0.9825);">Anjali</span>
<span class="t " style="left:865.6px;top:526.0px;font-size:18.5px;color:#2f2e2d;transform:scaleX(0.9637);">398</span>
<span class="t " style="left:583.7px;top:554.0px;font-size:18.5px;color:#2f2e2d;transform:scaleX(0.9969);">India</span>
<span class="t " style="left:703.8px;top:554.0px;font-size:18.5px;color:#2f2e2d;transform:scaleX(0.9359);">Harsha</span>
<span class="t " style="left:865.6px;top:554.0px;font-size:18.5px;color:#2f2e2d;transform:scaleX(0.9637);">398</span>
<span class="t " style="left:583.9px;top:583.0px;font-size:18.5px;color:#2f2e2d;transform:scaleX(0.9745);">New Zealand</span>
<span class="t " style="left:704.9px;top:583.0px;font-size:18.5px;color:#2f2e2d;transform:scaleX(0.9411);">Jacqueline</span>
<span class="t " style="left:865.6px;top:583.0px;font-size:18.5px;color:#2f2e2d;transform:scaleX(0.9637);">398</span>
<span class="t " style="left:583.7px;top:612.0px;font-size:18.5px;color:#2f2e2d;transform:scaleX(0.9969);">India</span>
<span class="t " style="left:704.9px;top:612.0px;font-size:18.5px;color:#2f2e2d;transform:scaleX(0.8963);">Jenelia</span>
<span class="t " style="left:865.6px;top:612.0px;font-size:18.5px;color:#2f2e2d;transform:scaleX(0.9637);">398</span>
<span class="t " style="left:583.7px;top:640.0px;font-size:18.5px;color:#2f2e2d;transform:scaleX(0.9969);">India</span>
<span class="t " style="left:703.8px;top:640.0px;font-size:18.5px;color:#2f2e2d;transform:scaleX(0.9264);">Kareena</span>
<span class="t " style="left:865.6px;top:640.0px;font-size:18.5px;color:#2f2e2d;transform:scaleX(0.9637);">398</span>
<span class="t " style="left:583.9px;top:669.0px;font-size:18.5px;color:#2f2e2d;transform:scaleX(0.9722);">Brazil</span>
<span class="t " style="left:703.7px;top:669.0px;font-size:18.5px;color:#2f2e2d;transform:scaleX(0.9673);">Nayantara</span>
<span class="t " style="left:865.6px;top:669.0px;font-size:18.5px;color:#2f2e2d;transform:scaleX(0.9637);">398</span>
<span class="t " style="left:584.5px;top:697.0px;font-size:18.5px;color:#2f2e2d;transform:scaleX(0.9206);">Canada</span>
<span class="t " style="left:704.4px;top:697.0px;font-size:18.5px;color:#2f2e2d;transform:scaleX(0.9413);">Samantha</span>
<span class="t " style="left:865.6px;top:697.0px;font-size:18.5px;color:#2f2e2d;transform:scaleX(0.9637);">398</span>
<span class="t " style="left:585.4px;top:726.0px;font-size:18.5px;color:#2f2e2d;transform:scaleX(0.9422);">America</span>
<span class="t " style="left:704.4px;top:726.0px;font-size:18.5px;color:#2f2e2d;transform:scaleX(0.9051);">Shreya</span>
<span class="t " style="left:865.6px;top:726.0px;font-size:18.5px;color:#2f2e2d;transform:scaleX(0.9637);">398</span>
<span class="t " style="left:583.9px;top:754.0px;font-size:18.5px;color:#2f2e2d;transform:scaleX(0.9745);">New Zealand</span>
<span class="t " style="left:704.4px;top:754.0px;font-size:18.5px;color:#2f2e2d;transform:scaleX(0.9311);">Soniya</span>
<span class="t " style="left:865.6px;top:754.0px;font-size:18.5px;color:#2f2e2d;transform:scaleX(0.9637);">398</span>
<span class="t " style="left:583.9px;top:783.0px;font-size:18.5px;color:#2f2e2d;transform:scaleX(0.9722);">Brazil</span>
<span class="t " style="left:703.7px;top:783.0px;font-size:18.5px;color:#2f2e2d;transform:scaleX(0.9892);">Rohit</span>
<span class="t " style="left:865.9px;top:783.0px;font-size:18.5px;color:#2f2e2d;transform:scaleX(0.9549);">433</span>
<span class="t " style="left:585.4px;top:812.0px;font-size:18.5px;color:#2f2e2d;transform:scaleX(0.9479);">Australia</span>
<span class="t " style="left:705.2px;top:812.0px;font-size:18.5px;color:#2f2e2d;transform:scaleX(0.9224);">Akshay</span>
<span class="t " style="left:865.9px;top:812.0px;font-size:18.5px;color:#2f2e2d;transform:scaleX(0.9587);">452</span>
<span class="t " style="left:583.7px;top:840.0px;font-size:18.5px;color:#2f2e2d;transform:scaleX(0.9969);">India</span>
<span class="t " style="left:704.3px;top:840.0px;font-size:18.5px;color:#2f2e2d;transform:scaleX(0.9593);">Girish</span>
<span class="t " style="left:865.9px;top:840.0px;font-size:18.5px;color:#2f2e2d;transform:scaleX(0.9549);">456</span>
<span class="t " style="left:584.6px;top:869.0px;font-size:18.5px;color:#2f2e2d;transform:scaleX(0.9679);">Switzerland</span>
<span class="t " style="left:704.9px;top:869.0px;font-size:18.5px;color:#2f2e2d;transform:scaleX(0.9734);">Joginder</span>
<span class="t " style="left:865.9px;top:869.0px;font-size:18.5px;color:#2f2e2d;transform:scaleX(0.9549);">456</span>
<span class="t " style="left:585.4px;top:897.0px;font-size:18.5px;color:#2f2e2d;transform:scaleX(0.9422);">America</span>
<span class="t " style="left:703.7px;top:897.0px;font-size:18.5px;color:#2f2e2d;transform:scaleX(0.9596);">Katrina</span>
<span class="t " style="left:865.9px;top:897.0px;font-size:18.5px;color:#2f2e2d;transform:scaleX(0.9537);">465</span>
<span class="t " style="left:583.7px;top:926.0px;font-size:18.5px;color:#2f2e2d;transform:scaleX(0.9969);">India</span>
<span class="t " style="left:705.2px;top:926.0px;font-size:18.5px;color:#2f2e2d;transform:scaleX(0.9430);">Ashish</span>
<span class="t " style="left:865.9px;top:926.0px;font-size:18.5px;color:#2f2e2d;transform:scaleX(0.9549);">466</span>
</body></html>
